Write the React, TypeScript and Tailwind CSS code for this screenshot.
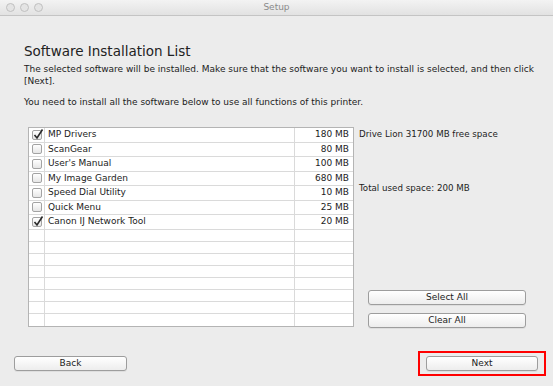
import React from "react";

type Item = { name: string; size: string; checked: boolean };

const items: Item[] = [
  { name: "MP Drivers", size: "180 MB", checked: true },
  { name: "ScanGear", size: "80 MB", checked: false },
  { name: "User's Manual", size: "100 MB", checked: false },
  { name: "My Image Garden", size: "680 MB", checked: false },
  { name: "Speed Dial Utility", size: "10 MB", checked: false },
  { name: "Quick Menu", size: "25 MB", checked: false },
  { name: "Canon IJ Network Tool", size: "20 MB", checked: true },
];

const rows: (Item | null)[] = [...items, ...Array(8).fill(null)];

function Checkbox({ checked }: { checked: boolean }) {
  return (
    <div className="relative w-[10px] h-[10px] rounded-[2px] border border-[#a3a3a3] bg-gradient-to-b from-white to-[#e6e6e6]">
      {checked && (
        <svg className="absolute left-[0px] top-[-3px]" width="11" height="12" viewBox="0 0 11 12">
          <path d="M1.5 7 L4 10 L9.5 1.5" fill="none" stroke="#2a2a2a" strokeWidth="1.6" />
        </svg>
      )}
    </div>
  );
}

function MacButton({ label, className }: { label: string; className: string }) {
  return (
    <div
      className={`flex items-center justify-center h-[15px] rounded-[3px] border border-[#9d9d9d] bg-gradient-to-b from-white to-[#ededed] text-[9px] text-[#1c1c1c] shadow-[0_1px_0_rgba(0,0,0,0.06)] ${className}`}
    >
      {label}
    </div>
  );
}

export default function App() {
  return (
    <div className="w-[553px] h-[386px] bg-[#ececec] flex flex-col font-['DejaVu_Sans',sans-serif] text-[#1c1c1c] overflow-hidden">
      <div className="h-[16px] grid grid-cols-[1fr_auto_1fr] items-center bg-gradient-to-b from-[#f3f3f3] to-[#e2e2e2] border-b border-[#c4c4c4]">
        <div className="flex gap-[5px] pl-[6px]">
          <div className="w-[9px] h-[9px] rounded-full border border-[#c0c0c0] bg-[#e4e4e4]" />
          <div className="w-[9px] h-[9px] rounded-full border border-[#c0c0c0] bg-[#e4e4e4]" />
          <div className="w-[9px] h-[9px] rounded-full border border-[#c0c0c0] bg-[#e4e4e4]" />
        </div>
        <div className="text-[9px] text-[#8a8a8a]">Setup</div>
        <div />
      </div>

      <div className="pl-[24px] pt-[27px]">
        <div className="text-[13.5px] leading-[16px] text-[#222]">Software Installation List</div>
        <div className="mt-[4px] w-[520px] text-[9px] leading-[12px]">
          The selected software will be installed. Make sure that the software you want to install is selected, and then click [Next].
        </div>
        <div className="mt-[9px] text-[9px] leading-[12px]">
          You need to install all the software below to use all functions of this printer.
        </div>
      </div>

      <div className="flex pl-[28px] pt-[19px]">
        <div className="w-[326px] h-[200px] bg-white border border-[#b4b4b4] grid grid-rows-[repeat(15,1fr)] text-[9px]">
          {rows.map((row, i) => (
            <div
              key={i}
              className="grid grid-cols-[16px_250px_1fr] border-b border-[#dadada] last:border-b-0"
            >
              <div className="flex items-center justify-center border-r border-[#dadada]">
                {row && <Checkbox checked={row.checked} />}
              </div>
              <div className="flex items-center pl-[3px] border-r border-[#dadada]">{row?.name}</div>
              <div className="flex items-center justify-end pr-[4px]">{row?.size}</div>
            </div>
          ))}
        </div>

        <div className="flex-1 flex flex-col pl-[5px] text-[8.7px]">
          <div className="mt-[1px]">Drive Lion 31700 MB free space</div>
          <div className="mt-[41px]">Total used space: 200 MB</div>
          <div className="mt-auto -mb-[1px] flex flex-col gap-[8px] pl-[9px] pr-[27px]">
            <MacButton label="Select All" className="w-full" />
            <MacButton label="Clear All" className="w-full" />
          </div>
        </div>
      </div>

      <div className="flex items-center justify-between pl-[14px] pr-[7px] mt-[24px]">
        <MacButton label="Back" className="w-[113px]" />
        <div className="border-2 border-[#ff0000] px-[6px] py-[3px]">
          <MacButton label="Next" className="w-[112px]" />
        </div>
      </div>
    </div>
  );
}
